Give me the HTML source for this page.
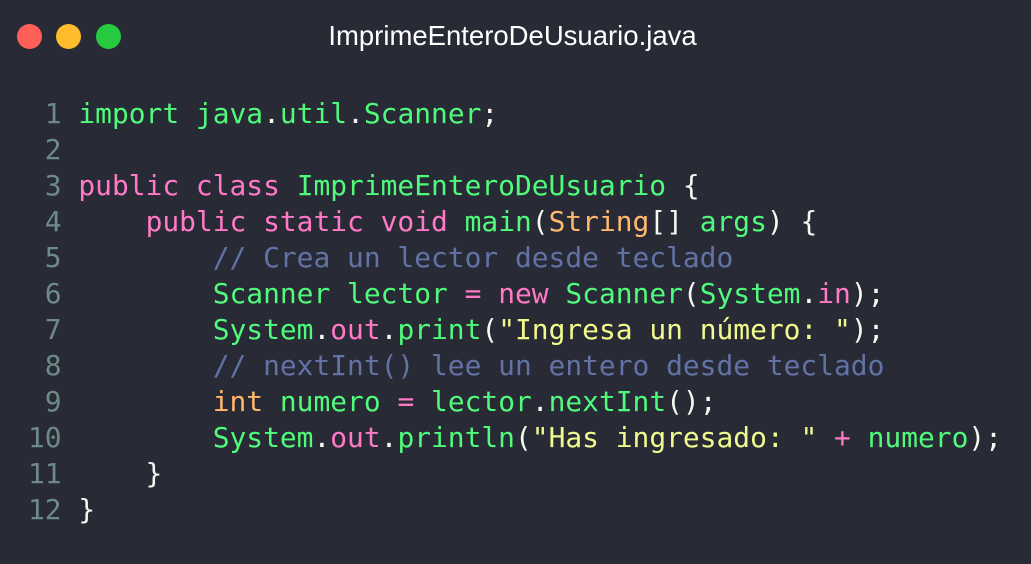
<!DOCTYPE html>
<html><head><meta charset="utf-8"><style>
html,body{margin:0;padding:0;}
body{width:1031px;height:564px;background:#282a36;overflow:hidden;position:relative;}
.dot{position:absolute;top:24px;width:25px;height:25px;border-radius:50%;}
.title{position:absolute;top:19px;left:-3px;width:1031px;text-align:center;color:#fff;font:27.5px "Liberation Sans",sans-serif;line-height:34px;}
pre{position:absolute;left:28px;top:96px;margin:0;font-family:"DejaVu Sans Mono",monospace;font-size:27.9px;line-height:36px;color:#f8f8f2;}
.n{color:#6e8a88}.g{color:#50fa7b}.p{color:#ff79c6}.o{color:#ffb86c}.y{color:#f1fa8c}.c{color:#6272a4}
</style></head><body>
<div class="dot" style="left:17px;background:#ff5f56"></div>
<div class="dot" style="left:56px;background:#ffbd2e"></div>
<div class="dot" style="left:96px;background:#27c93f"></div>
<div class="title">ImprimeEnteroDeUsuario.java</div>
<pre><span class="n"> 1</span> <span class="g">import java</span>.<span class="g">util</span>.<span class="g">Scanner</span>;
<span class="n"> 2</span>
<span class="n"> 3</span> <span class="p">public class</span> <span class="g">ImprimeEnteroDeUsuario</span> {
<span class="n"> 4</span>     <span class="p">public static void</span> <span class="g">main</span>(<span class="o">String</span>[] <span class="g">args</span>) {
<span class="n"> 5</span>         <span class="c">// Crea un lector desde teclado</span>
<span class="n"> 6</span>         <span class="g">Scanner lector</span> <span class="p">=</span> <span class="p">new</span> <span class="g">Scanner</span>(<span class="g">System</span>.<span class="p">in</span>);
<span class="n"> 7</span>         <span class="g">System</span>.<span class="p">out</span>.<span class="g">print</span>(<span class="y">"Ingresa un número: "</span>);
<span class="n"> 8</span>         <span class="c">// nextInt() lee un entero desde teclado</span>
<span class="n"> 9</span>         <span class="o">int</span> <span class="g">numero</span> <span class="p">=</span> <span class="g">lector</span>.<span class="g">nextInt</span>();
<span class="n">10</span>         <span class="g">System</span>.<span class="p">out</span>.<span class="g">println</span>(<span class="y">"Has ingresado: "</span> <span class="p">+</span> <span class="g">numero</span>);
<span class="n">11</span>     }
<span class="n">12</span> }</pre>
</body></html>
